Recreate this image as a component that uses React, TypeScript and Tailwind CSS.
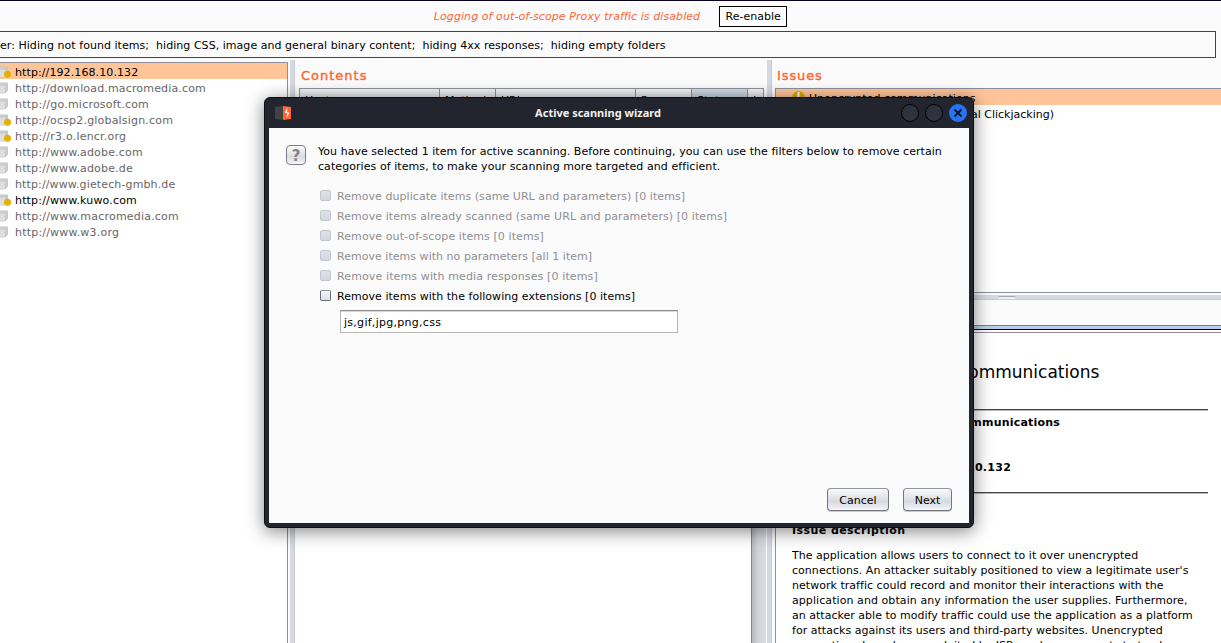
import React from "react";

const hosts = [
  { url: "http://192.168.10.132", dot: true, tone: "bg-[#ffc599] text-black tracking-[0.1px]" },
  { url: "http://download.macromedia.com", dot: false, tone: "text-[#666] tracking-[0.16px]" },
  { url: "http://go.microsoft.com", dot: false, tone: "text-[#666] tracking-[0.22px]" },
  { url: "http://ocsp2.globalsign.com", dot: true, tone: "text-[#666] tracking-[0.19px]" },
  { url: "http://r3.o.lencr.org", dot: true, tone: "text-[#666] tracking-[0.22px]" },
  { url: "http://www.adobe.com", dot: false, tone: "text-[#666] tracking-[0.17px]" },
  { url: "http://www.adobe.de", dot: false, tone: "text-[#666] tracking-[0.17px]" },
  { url: "http://www.gietech-gmbh.de", dot: false, tone: "text-[#666] tracking-[0.13px]" },
  { url: "http://www.kuwo.com", dot: true, tone: "text-black tracking-[0.17px]" },
  { url: "http://www.macromedia.com", dot: false, tone: "text-[#666] tracking-[0.2px]" },
  { url: "http://www.w3.org", dot: false, tone: "text-[#666] tracking-[0.2px]" },
];

const columns = [
  { name: "Host", width: "w-[140px]" },
  { name: "Method", width: "w-[56px]" },
  { name: "URL", width: "w-[140px]" },
  { name: "Params", width: "w-[56px]" },
  { name: "Status", width: "w-[56px]" },
  { name: "L", width: "w-[16px]" },
];

const filters = [
  { label: "Remove duplicate items (same URL and parameters) [0 items]", on: false, tracking: "tracking-[0.05px]" },
  { label: "Remove items already scanned (same URL and parameters) [0 items]", on: false, tracking: "tracking-[0.08px]" },
  { label: "Remove out-of-scope items [0 items]", on: false, tracking: "tracking-[0.09px]" },
  { label: "Remove items with no parameters [all 1 item]", on: false, tracking: "tracking-[0.03px]" },
  { label: "Remove items with media responses [0 items]", on: false, tracking: "tracking-[0.12px]" },
  { label: "Remove items with the following extensions [0 items]", on: true, tracking: "tracking-[0.04px]" },
];

const description = [
  { text: "The application allows users to connect to it over unencrypted", tracking: "tracking-[0.03px]" },
  { text: "connections. An attacker suitably positioned to view a legitimate user's", tracking: "tracking-[0.04px]" },
  { text: "network traffic could record and monitor their interactions with the", tracking: "tracking-[0.03px]" },
  { text: "application and obtain any information the user supplies. Furthermore,", tracking: "tracking-[0.075px]" },
  { text: "an attacker able to modify traffic could use the application as a platform", tracking: "tracking-[0.015px]" },
  { text: "for attacks against its users and third-party websites. Unencrypted", tracking: "tracking-[0.03px]" },
  { text: "connections have been exploited by ISPs and governments to track", tracking: "tracking-[0.03px]" },
];

function HostIcon({ dot }: { dot: boolean }) {
  return (
    <svg width="12" height="16" viewBox="0 0 12 16" className="shrink-0">
      <path d="M-3 6L0 4H7.500V11.500L5 14H-3Z" fill="#d2d2d2" stroke="#c6c6c6" />
      <path d="M-1 6.500H5V14H-1Z" fill="#dedede" />
      <path d="M0 6L5.500 6L7.500 4M5.500 6V13.500" fill="none" stroke="#c4c4c4" strokeWidth="0.8" />
      {dot && <circle cx="7.500" cy="11.300" r="3.500" fill="#e5b000" />}
    </svg>
  );
}

function Tree() {
  return (
    <div className="mt-[2px] w-[288px] shrink-0 border-r border-t border-[#8f8f9b] bg-white">
      {hosts.map((h) => (
        <div key={h.url} className={"flex h-4 items-start gap-[3px] " + h.tone}>
          <HostIcon dot={h.dot} />
          <span className="pt-[2px] leading-4">{h.url}</span>
        </div>
      ))}
    </div>
  );
}

function Contents() {
  return (
    <div className="flex w-[472px] shrink-0 flex-col">
      <div className="flex h-[28px] items-center pl-[6px] pt-[4px] text-[13px] font-medium tracking-[1px] text-[#ff6633] [-webkit-text-stroke:0.4px_#ff6633]">Contents</div>
      <div className="ml-1 flex h-5 w-[465px] border-l border-t border-[#8f8f9b]">
        {columns.map((c) => (
          <div
            key={c.name}
            className={
              "h-full shrink-0 overflow-hidden whitespace-nowrap border-r border-[#8f8f9b] pl-[5px] pt-[4px] leading-4 " +
              c.width +
              (c.name === "Status" ? " bg-linear-to-b from-[#d3dde7] to-[#a9bccd]" : " bg-linear-to-b from-[#f2f3f5] to-[#c9ccd4]")
            }
          >
            {c.name}
            {c.name === "Status" && <span className="ml-1 text-[8px] text-[#3b5a87]">▲</span>}
          </div>
        ))}
      </div>
      <div className="flex min-h-0 flex-1">
        <div className="w-[456px] bg-white" />
        <div className="w-[15px] border-l border-[#7f828b] bg-linear-to-r from-[#b4b7c0] via-[#d0d3da] via-40% to-[#d9dbe2]" />
      </div>
    </div>
  );
}

function Rule() {
  return <div className="h-[2px] w-[416px] shrink-0 border-t border-[#444] bg-[#b8b8b8]" />;
}

function Issues() {
  return (
    <div className="flex min-w-0 flex-1 flex-col pl-[3px]">
      <div className="flex h-[28px] shrink-0 items-center pl-[2px] pt-[4px] text-[13px] font-medium tracking-[0.9px] text-[#ff6633] [-webkit-text-stroke:0.4px_#ff6633]">Issues</div>
      <div className="h-[205px] shrink-0 border-b border-l border-t border-[#8f8f9b] bg-white">
        <div className="flex h-4 items-start bg-[#ffc599] pl-[15px]">
          <svg width="15" height="16" viewBox="0 0 15 16">
            <circle cx="7.500" cy="8.500" r="6.500" fill="#dca900" />
            <path d="M7.500 3V9M7.500 11V13" stroke="#fff" strokeWidth="2" />
          </svg>
          <span className="ml-[3px] pt-[2px] leading-4 tracking-[0.05px]">Unencrypted communications</span>
        </div>
        <div className="flex h-[18px] w-[278px] items-center justify-end whitespace-nowrap pt-[2px] leading-4">
          Frameable response (potential Clickjacking)
        </div>
      </div>
      <div className="mt-[2px] flex h-[5px] shrink-0 border-b border-[#c9ccd4] bg-[#d6d9e0] pl-[223px]">
        <div className="mt-px h-[3px] w-[18px] rounded-t-xs border-t border-[#a4a8b3] bg-[#eceef1]" />
      </div>
      <div className="h-[25px] shrink-0" />
      <div className="h-[5px] shrink-0 border-b border-t border-b-black border-t-[#708090] bg-[#b8cfe5]" />
      <div className="mt-[2px] flex min-h-0 flex-1 flex-col border-l border-t border-[#8f8f9b] bg-white pl-4">
        <div className="flex h-[76px] shrink-0 items-center gap-[6px] whitespace-nowrap text-[17px] leading-6">
          <svg width="46" height="46" viewBox="0 0 46 46">
            <circle cx="23" cy="23" r="19" fill="#dca900" />
          </svg>
          <span className="pt-px">Unencrypted communications</span>
        </div>
        <Rule />
        <div className="grid grid-cols-[78px_1fr] pt-1 font-bold leading-[15px] tracking-[0.22px]">
          <span>Issue:</span><span className="tracking-[0.2px]">Unencrypted communications</span>
          <span>Severity:</span><span>Low</span>
          <span>Confidence:</span><span>Certain</span>
          <span>Host:</span><span className="tracking-[0.27px]">http://192.168.10.132</span>
        </div>
        <div className="h-[17px] shrink-0" />
        <Rule />
        <div className="mt-7 font-bold leading-[17px] tracking-[0.43px]">Issue description</div>
        <div className="mt-[9px] h-[96px] overflow-hidden whitespace-nowrap leading-[15px]">
          {description.map((l) => <div key={l.text} className={l.tracking}>{l.text}</div>)}
        </div>
      </div>
    </div>
  );
}

function CheckBox({ on }: { on: boolean }) {
  return (
    <span
      className={
        "mb-px size-[11px] shrink-0 rounded-[2px] border bg-linear-to-b " +
        (on ? "border-[#6b6d78] border-t-[#8d909b] from-[#f6f7f9] to-[#dcdfe6]" : "border-[#c2c6d0] from-[#dfe1e6] to-[#d5d8df]")
      }
    />
  );
}

function WizardButton({ children, width }: { children: string; width: string }) {
  return (
    <button className={"flex h-[23px] items-center justify-center rounded-[4px] border border-[#73767f] border-t-[#92949c] bg-linear-to-b from-[#fafafb] via-[#d6d9e0] via-60% to-[#f4f6fb] pt-[2px] shadow-[0_1px_0_#c8cad0] " + width}>
      {children}
    </button>
  );
}

function Wizard() {
  return (
    <div className="absolute left-[264px] top-[96px] flex h-[431px] w-[710px] flex-col rounded-[6px] border border-[#0d0e14] bg-[#23252e] shadow-[0_3px_18px_rgba(0,0,0,0.5)]">
      <div className="flex h-[30px] shrink-0 items-center pl-[10px] pr-[6px]">
        <svg width="17" height="14" viewBox="0 0 17 14">
          <path d="M0 1L8 0V14L0 13Z" fill="#424242" />
          <path d="M8 0L16 1V13L8 14Z" fill="#ff6633" />
          <path d="M12.500 1.500L9.800 6.800L12.500 7.200L11.500 12L14.500 6.800L12 6.200Z" fill="#fff" />
        </svg>
        <div className="flex-1 pl-[3px] text-center font-['Noto_Sans'] text-[11px] font-bold leading-4 text-[#f2f2f2]">Active scanning wizard</div>
        <div className="flex gap-[6px]">
          <span className="size-[18px] rounded-full border border-black bg-[#2f333f]" />
          <span className="size-[18px] rounded-full border border-black bg-[#2f333f]" />
          <svg width="18" height="18" viewBox="0 0 18 18">
            <circle cx="9" cy="9" r="9" fill="#2474f5" />
            <path d="M5.500 5.500L12.500 12.500M12.500 5.500L5.500 12.500" stroke="#0b1630" strokeWidth="2" />
          </svg>
        </div>
      </div>
      <div className="mx-1 mb-1 flex min-h-0 flex-1 flex-col bg-[#fbfbfb]">
        <div className="flex pl-[17px] pt-[16px]">
          <div className="mt-px flex size-5 items-center justify-center rounded-[4px] border border-[#7d808a] bg-linear-to-b from-[#fafafb] via-[#d9dce3] via-60% to-[#f4f6fb] pt-px text-[15px] font-bold leading-5 text-[#858585]">?</div>
          <div className="ml-3 whitespace-nowrap leading-[15px]">
            <div className="tracking-[0.045px]">You have selected 1 item for active scanning. Before continuing, you can use the filters below to remove certain</div>
            <div className="tracking-[0.07px]">categories of items, to make your scanning more targeted and efficient.</div>
          </div>
        </div>
        <div className="mt-3 pl-[51px]">
          {filters.map((f) => (
            <div key={f.label} className={"flex h-5 items-center gap-[6px] whitespace-nowrap " + (f.on ? "text-black" : "text-[#8e8f93]")}>
              <CheckBox on={f.on} />
              <span className={"pt-[2px] " + f.tracking}>{f.label}</span>
            </div>
          ))}
        </div>
        <div className="ml-[71px] mt-1 flex h-[23px] w-[338px] items-center border border-[#b5b5b5] border-t-[#8c8c8c] bg-white pl-[3px] pt-[3px] tracking-[0.28px] shadow-[inset_0_1px_0_#d8d8d8]">js,gif,jpg,png,css</div>
        <div className="flex-1" />
        <div className="mb-[12px] mr-[17px] flex justify-end gap-[14px]">
          <WizardButton width="w-[62px]">Cancel</WizardButton>
          <WizardButton width="w-[49px]">Next</WizardButton>
        </div>
      </div>
    </div>
  );
}

export default function App() {
  return (
    <div className="relative flex h-[643px] w-[1221px] flex-col overflow-hidden border-t border-[#0a0020] bg-[#fbfbfb] font-['DejaVu_Sans',sans-serif] text-[11px] leading-4 text-black">
      <div className="flex h-[30px] shrink-0 items-center justify-center gap-[19px]">
        <span className="pt-[2px] italic tracking-[0.08px] text-[#ff6633]">Logging of out-of-scope Proxy traffic is disabled</span>
        <button className="h-[21px] w-[68px] border border-black bg-white pt-[2px]">Re-enable</button>
      </div>
      <div className="flex h-[27px] w-[1216px] shrink-0 items-center whitespace-pre border-y border-r border-[#444] pt-[2px] tracking-[0.04px]">
        {"er: Hiding not found items;  hiding CSS, image and general binary content;  hiding 4xx responses;  hiding empty folders"}
      </div>
      <div className="mt-[2px] flex min-h-0 flex-1">
        <Tree />
        <div className="ml-[2px] w-[5px] shrink-0 border-r border-[#c9ccd4] bg-[#d6d9e0]" />
        <Contents />
        <div className="w-[5px] shrink-0 border-r border-[#c9ccd4] bg-[#d6d9e0]" />
        <Issues />
      </div>
      <Wizard />
    </div>
  );
}
